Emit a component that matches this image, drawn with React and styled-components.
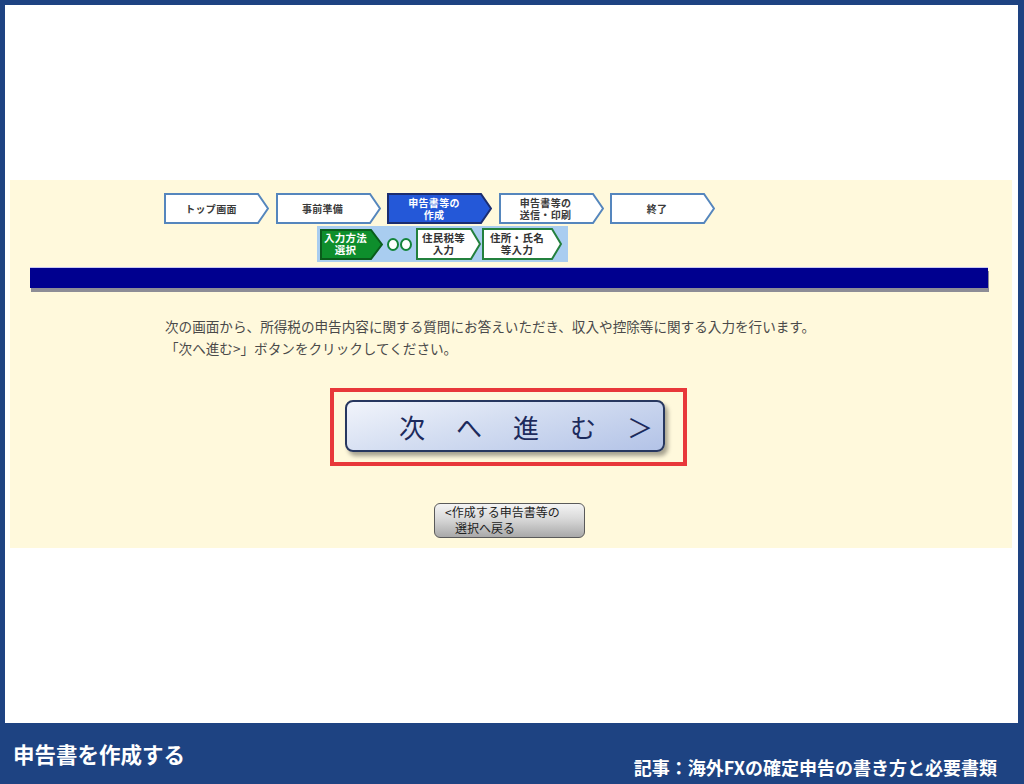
import React from 'react';
import styled, { createGlobalStyle } from 'styled-components';

const Global = createGlobalStyle`
  html, body { margin: 0; padding: 0; }
  body {
    background: #1e4382;
    font-family: "Noto Sans CJK JP", "Noto Sans", sans-serif;
  }
`;

const Frame = styled.div`
  width: 1024px;
  height: 784px;
  box-sizing: border-box;
  padding: 5px 6px 0 5px;
  display: flex;
  flex-direction: column;
  background: #1e4382;
`;

const Sheet = styled.div`
  height: 718px;
  background: #ffffff;
  padding-top: 175px;
  box-sizing: border-box;
`;

const Panel = styled.div`
  margin: 0 6px 0 5px;
  height: 368px;
  background: #fff9dc;
  box-sizing: border-box;
  padding-top: 13px;
  display: flex;
  flex-direction: column;
`;

const StepRow = styled.div`
  display: flex;
  gap: 6.5px;
  margin-left: 154px;
`;

const ShapeBox = styled.div`
  position: relative;
  width: ${p => p.$w}px;
  height: ${p => p.$h}px;
  flex: none;
`;

const ShapeSvg = styled.svg`
  position: absolute;
  left: 0;
  top: 0;
`;

const ShapeLabel = styled.div`
  position: relative;
  height: 100%;
  box-sizing: border-box;
  padding-right: ${p => p.$tip}px;
  display: flex;
  align-items: center;
  justify-content: center;
  text-align: center;
  font-size: ${p => p.$fs}px;
  line-height: ${p => p.$lh}px;
  font-weight: 700;
  color: ${p => p.$color};
  white-space: pre-line;
  letter-spacing: 0.3px;
`;

function Arrow({ w, h, tip = 11, fill, stroke, sw = 2, color, fs = 10, lh = 12, children }) {
  const o = sw / 2;
  const pts = `${o},${o} ${w - tip},${o} ${w - o},${h / 2} ${w - tip},${h - o} ${o},${h - o}`;
  return (
    <ShapeBox $w={w} $h={h}>
      <ShapeSvg width={w} height={h} viewBox={`0 0 ${w} ${h}`}>
        <polygon points={pts} fill={fill} stroke={stroke} strokeWidth={sw} strokeLinejoin="miter" />
      </ShapeSvg>
      <ShapeLabel $tip={tip} $color={color} $fs={fs} $lh={lh}>{children}</ShapeLabel>
    </ShapeBox>
  );
}

const SubPanel = styled.div`
  margin: 2px 0 0 307px;
  width: 251px;
  height: 36px;
  background: #a9cdf0;
  display: flex;
  align-items: center;
  box-sizing: border-box;
  padding-left: 3px;
`;

const Circles = styled.div`
  display: flex;
  gap: 1px;
  margin: 0 4px 0 4px;
`;

const Circle = styled.span`
  width: 8px;
  height: 9px;
  border: 2px solid #14843a;
  border-radius: 50%;
  background: #ffffff;
`;

const SubGap = styled.div`
  width: 1px;
  flex: none;
`;

const NavyBar = styled.div`
  margin: 5px 0 0 20px;
  width: 958px;
  height: 21px;
  background: #00008f;
  border-top: 1px solid #c9c9f2;
  box-sizing: border-box;
  box-shadow: 1px 4px 0 #8d8d96;
`;

const Message = styled.div`
  margin: 27px 0 0 155px;
  font-size: 13.6px;
  line-height: 22px;
  color: #4a4a4a;
`;

const Highlight = styled.div`
  margin: 29px 0 0 320px;
  width: 357px;
  height: 78px;
  box-sizing: border-box;
  border: 4px solid #e8383a;
  padding: 8px 0 0 11px;
`;

const NextButton = styled.div`
  width: 320px;
  height: 52px;
  box-sizing: border-box;
  border: 2px solid #27375f;
  border-radius: 8px;
  background: linear-gradient(165deg, #f1f4fb 0%, #d3ddf1 45%, #b3c3e7 100%);
  box-shadow: 3px 4px 4px rgba(0, 0, 0, 0.35);
  display: flex;
  align-items: center;
  padding-left: 52px;
  font-size: 26px;
  letter-spacing: 31px;
  color: #1c2a5c;
  white-space: nowrap;
`;

const BackButton = styled.div`
  margin: 37px 0 0 424px;
  width: 151px;
  height: 35px;
  box-sizing: border-box;
  border: 1px solid #5a5a5a;
  border-radius: 6px;
  background: linear-gradient(180deg, #f4f4f4 0%, #d9d9d9 45%, #a9a9a9 100%);
  padding: 0 0 0 10px;
  font-size: 12px;
  line-height: 16px;
  color: #222;
`;

const BackLine = styled.span`
  display: block;
  padding-left: ${p => (p.$indent ? 10 : 0)}px;
`;

const Footer = styled.div`
  height: 61px;
  display: flex;
  justify-content: space-between;
  padding: 0 21px 0 8px;
  color: #ffffff;
  font-weight: 700;
`;

const Title = styled.div`
  align-self: flex-start;
  margin-top: 20px;
  font-size: 21.5px;
  line-height: 22px;
`;

const Article = styled.div`
  align-self: flex-end;
  margin-bottom: 8px;
  font-size: 18px;
  line-height: 18px;
`;

const steps = [
  { label: 'トップ画面' },
  { label: '事前準備' },
  { label: '申告書等の\n作成', active: true },
  { label: '申告書等の\n送信・印刷' },
  { label: '終了' },
];

export default function App() {
  return (
    <Frame>
      <Global />
      <Sheet>
        <Panel>
          <StepRow>
            {steps.map(s => (
              <Arrow
                key={s.label}
                w={105}
                h={31}
                fill={s.active ? '#2458d8' : '#ffffff'}
                stroke={s.active ? '#1b2d70' : '#5586bd'}
                color={s.active ? '#ffffff' : '#3a3a3a'}
              >
                {s.label}
              </Arrow>
            ))}
          </StepRow>
          <SubPanel>
            <Arrow w={63} h={31} tip={12} fill="#0e8e2c" stroke="#0a5c1b" color="#ffffff" fs={10.5}>
              {'入力方法\n選択'}
            </Arrow>
            <Circles>
              <Circle />
              <Circle />
            </Circles>
            <Arrow w={65} h={32} tip={10} fill="#ffffff" stroke="#23803d" color="#333" fs={10.5}>
              {'住民税等\n入力'}
            </Arrow>
            <SubGap />
            <Arrow w={80} h={32} tip={10} fill="#ffffff" stroke="#23803d" color="#333" fs={10.5}>
              {'住所・氏名\n等入力'}
            </Arrow>
          </SubPanel>
          <NavyBar />
          <Message>
            次の画面から、所得税の申告内容に関する質問にお答えいただき、収入や控除等に関する入力を行います。
            <br />
            「次へ進む&gt;」ボタンをクリックしてください。
          </Message>
          <Highlight>
            <NextButton>次へ進む＞</NextButton>
          </Highlight>
          <BackButton>
            <BackLine>&lt;作成する申告書等の</BackLine>
            <BackLine $indent>選択へ戻る</BackLine>
          </BackButton>
        </Panel>
      </Sheet>
      <Footer>
        <Title>申告書を作成する</Title>
        <Article>記事：海外FXの確定申告の書き方と必要書類</Article>
      </Footer>
    </Frame>
  );
}
